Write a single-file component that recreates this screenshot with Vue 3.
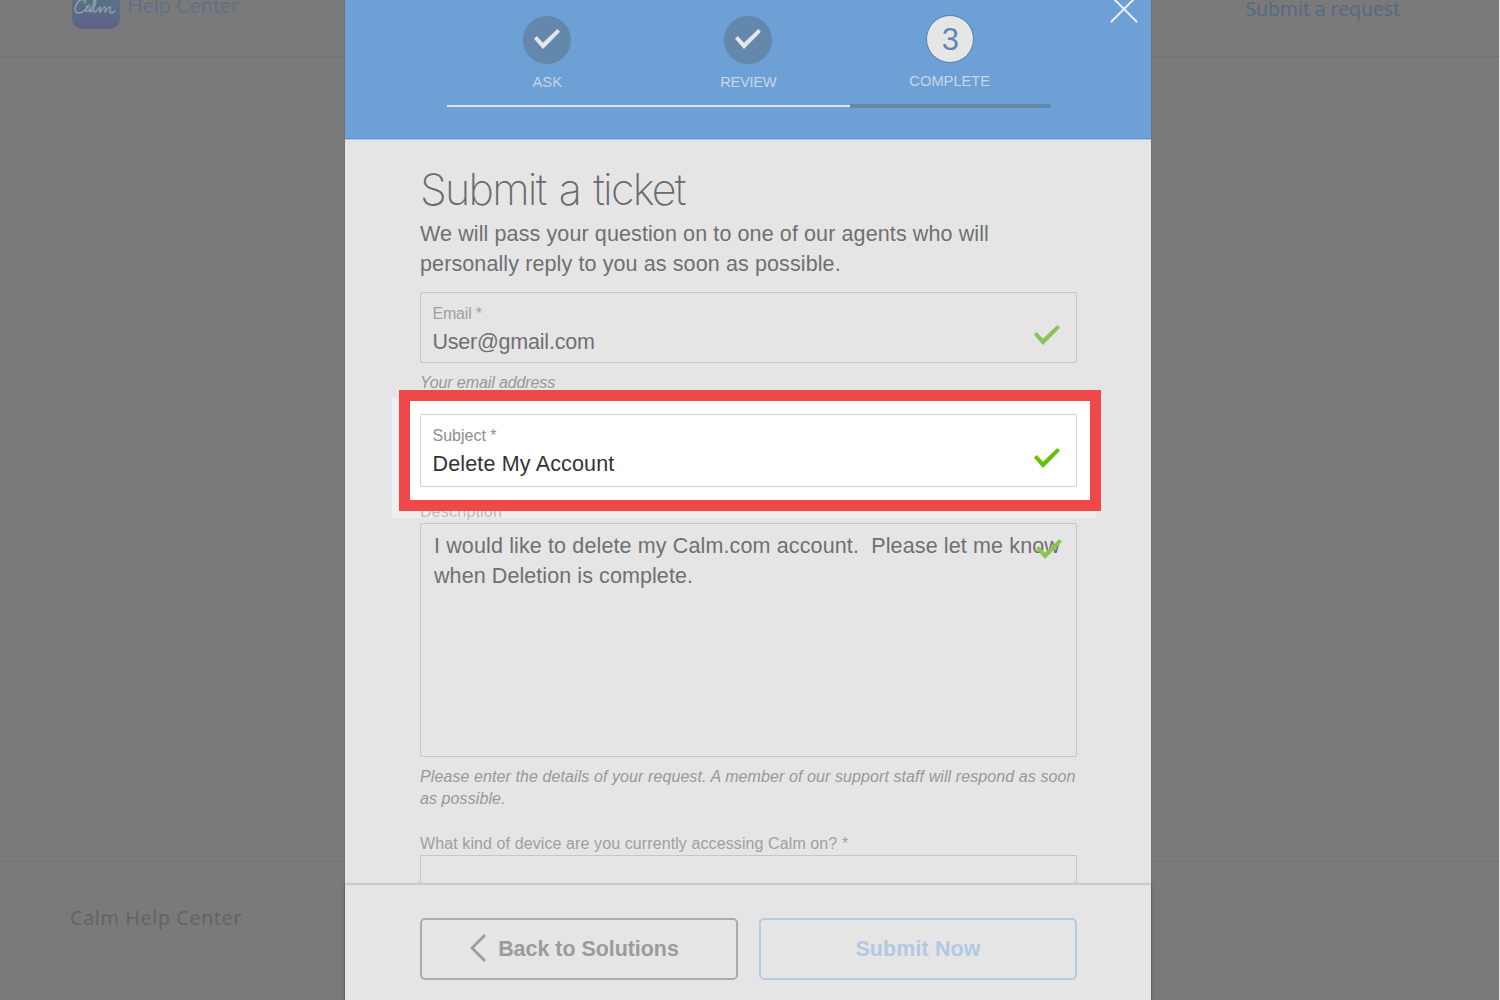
<script setup>
const steps = [
  { label: 'ASK', done: true },
  { label: 'REVIEW', done: true },
  { label: 'COMPLETE', done: false, number: 3 },
]
const checkPoints = '0,29 8,21 27,41 70,0 78,8 27,60'
</script>

<template>
  <div class="screen">
    <div class="page">
      <header class="page-header">
        <div class="brand">
          <div class="logo">
            <svg viewBox="0 0 48 48" width="48" height="48" fill="none" stroke="#929ca8" stroke-width="1.5" stroke-linecap="round" stroke-linejoin="round">
              <path d="M13 22 C14 18 10 17 6 21 C2 26 2 32 7 32 C11 32 13 29 16 26 C19 23 15 24 14 28 C13 32 17 31 19 26 L18 31 C22 30 25 20 23 18 C21 20 20 31 23 31 C26 30 27 26 28 26 C29 27 27 31 28 31 C30 29 31 26 33 26 C35 27 32 31 33 31 C35 29 36 26 38 26 C40 27 36 32 39 32 C41 32 42 31 43 30" />
            </svg>
          </div>
          <span class="brand-name">Help Center</span>
        </div>
        <a class="request">Submit a request</a>
      </header>
      <main class="page-main"></main>
      <footer class="page-footer">Calm Help Center</footer>
    </div>

    <section class="modal">
      <div class="modal-header">
        <svg class="close" viewBox="0 0 30 30" width="30" height="30" fill="none" stroke="#e9edf2" stroke-width="2" stroke-linecap="round">
          <path d="M2.5 2.5 L27.5 27.5 M27.5 2.5 L2.5 27.5" />
        </svg>
        <ol class="steps">
          <li v-for="s in steps" :key="s.label" class="step" :class="{ current: !s.done }">
            <span class="dot">
              <svg v-if="s.done" viewBox="0 0 78 60" width="26" height="20"><polygon :points="checkPoints" fill="#e6e6e6" /></svg>
              <template v-else>{{ s.number }}</template>
            </span>
            <span class="step-label" :class="s.label.toLowerCase()">{{ s.label }}</span>
            <span class="bar"></span>
          </li>
        </ol>
      </div>

      <div class="modal-body">
        <h1>Submit a ticket</h1>
        <p class="intro">We will pass your question on to one of our agents who will<br />personally reply to you as soon as possible.</p>

        <div class="field email">
          <span class="label email-label">Email *</span>
          <span class="value email-value">User@gmail.com</span>
          <svg class="check" viewBox="0 0 78 60" width="26" height="20"><polygon :points="checkPoints" /></svg>
        </div>
        <p class="hint email-hint">Your email address</p>

        <div class="spotlight">
          <div class="ghost"></div>
          <div class="frame"></div>
          <div class="field subject">
            <span class="label">Subject *</span>
            <span class="value">Delete My Account</span>
            <svg class="check" viewBox="0 0 78 60" width="26" height="20"><polygon :points="checkPoints" /></svg>
          </div>
        </div>

        <div class="label desc-label">Description</div>
        <div class="field textarea">
          <span class="first-line">I would like to delete my Calm.com account.&nbsp; Please let me know</span><br />when Deletion is complete.
          <svg class="check" viewBox="0 0 78 60" width="26" height="20"><polygon :points="checkPoints" /></svg>
        </div>
        <p class="hint desc-hint">Please enter the details of your request. A member of our support staff will respond as soon<br />as possible.</p>

        <div class="label device-label">What kind of device are you currently accessing Calm on? *</div>
        <div class="field device"></div>
      </div>

      <div class="modal-footer">
        <button class="btn back">
          <svg viewBox="0 0 16 28" width="16" height="28" fill="none" stroke="#9b9b9b" stroke-width="2.6"><path d="M15 1 L2 14 L15 27" /></svg>
          <span>Back to Solutions</span>
        </button>
        <button class="btn submit">Submit Now</button>
      </div>
    </section>
  </div>
</template>

<style>
body {
  margin: 0;
  overflow: hidden;
}
</style>

<style scoped>
* {
  box-sizing: border-box;
}
.screen {
  position: relative;
  width: 1500px;
  height: 1000px;
  overflow: hidden;
  font-family: "Liberation Sans", Arial, sans-serif;
}
.page {
  display: flex;
  flex-direction: column;
  height: 1000px;
  background: #7a7a7a;
  border-right: 1px solid #e4e4e4;
}
.page-header {
  display: flex;
  justify-content: space-between;
  height: 57px;
  padding: 0 99px 0 72px;
  border-bottom: 1px solid #747474;
}
.brand {
  display: flex;
  gap: 7px;
}
.logo {
  width: 48px;
  height: 48px;
  margin-top: -19px;
  border-radius: 10px;
  background: linear-gradient(#587285 40%, #5c6888 75%, #625f86);
}
.logo svg {
  display: block;
}
.brand-name {
  margin-top: -8px;
  font: 400 21px/26px Lato, sans-serif;
  color: #617184;
}
.request {
  height: 22px;
  font: 400 19.5px/18px "Noto Sans", sans-serif;
  letter-spacing: -0.1px;
  color: #566a82;
}
.page-main {
  flex: 1;
}
.page-footer {
  height: 139px;
  padding: 43px 70px 0;
  border-top: 1px solid #737373;
  font: 400 20px/26px "Noto Sans", sans-serif;
  letter-spacing: 0.45px;
  color: #646464;
}

.modal {
  position: absolute;
  top: 0;
  left: 345px;
  display: flex;
  flex-direction: column;
  width: 806px;
  height: 1000px;
  background: #e5e5e5;
  box-shadow: 0 0 1px rgba(0, 0, 0, 0.3);
}
.modal-header {
  position: relative;
  height: 140px;
  background: #6da0d5;
  border-bottom: 1px solid #a9c8ea;
  box-shadow: inset 0 -1px #5c95d8;
}
.close {
  position: absolute;
  top: -6.5px;
  left: 764.3px;
}
.steps {
  display: flex;
  width: 604.5px;
  margin: 0 0 0 101.5px;
  padding: 15.5px 0 0;
  list-style: none;
}
.step {
  display: flex;
  flex: 1;
  flex-direction: column;
  align-items: center;
}
.dot {
  display: flex;
  align-items: center;
  justify-content: center;
  width: 48px;
  height: 48px;
  margin-left: -1px;
  padding-bottom: 1.5px;
  border-radius: 50%;
  background: #6487ac;
}
.current .dot {
  margin-top: -1px;
  margin-left: 0;
  padding: 2px 0 0;
  border: 1px solid #5580ad;
  background: #e6e6e6;
  color: #5c88b6;
  font-size: 31px;
  line-height: 36px;
}
.step-label {
  height: 18px;
  margin-top: 9.5px;
  font-size: 14.7px;
  line-height: 18px;
  color: #c8d6e6;
}
.complete {
  margin-left: -1px;
}
.review {
  margin-left: -1px;
  letter-spacing: -0.3px;
}
.bar {
  width: 100%;
  height: 2px;
  margin-top: 14px;
  background: #dfe4ea;
}
.current .bar {
  height: 4px;
  margin-top: 14px;
  background: #6487ac;
}

.modal-body {
  height: 743px;
  padding: 23px 74px 0 75px;
}
h1 {
  margin: 0;
  font: 200 43px/52px Inter, sans-serif;
  letter-spacing: -1.75px;
  word-spacing: 2.8px;
  color: #6a6a6a;
}
.intro {
  margin: 4px 0 13px;
  font-size: 21.5px;
  line-height: 30px;
  letter-spacing: 0.11px;
  white-space: nowrap;
  color: #707070;
}
.field {
  position: relative;
  display: flex;
  flex-direction: column;
  border: 1px solid #c6c6c6;
  border-radius: 2px;
  padding: 12px 11.5px 0;
}
.email {
  height: 71px;
}
.label {
  font-size: 16px;
  line-height: 18px;
  color: #9f9f9f;
}
.email-label {
  letter-spacing: -0.2px;
}
.value {
  margin-top: 6px;
  font-size: 21.5px;
  line-height: 26px;
  letter-spacing: 0.16px;
  color: #707070;
}
.email-value {
  letter-spacing: -0.22px;
}
.check {
  position: absolute;
  top: 32px;
  left: 613.3px;
  fill: #8bc454;
}
.hint {
  margin: 0;
  font-size: 16px;
  font-style: italic;
  line-height: 22.5px;
  white-space: nowrap;
  color: #989898;
}
.email-hint {
  height: 22px;
  margin: 9px 0 20px;
  letter-spacing: -0.1px;
}
.spotlight {
  position: relative;
}
.ghost {
  position: absolute;
  top: -17px;
  left: -28px;
  width: 704px;
  height: 121px;
  background: #efefef;
}
.frame {
  position: absolute;
  z-index: 2;
  top: -24px;
  left: -21px;
  width: 702px;
  height: 121px;
  border: 11px solid #f04848;
  background: #fff;
}
.subject {
  z-index: 3;
  height: 73px;
  border-color: #d0d0d0;
}
.subject .label {
  color: #8e8e8e;
}
.subject .value {
  color: #333;
}
.subject .check {
  top: 33px;
  fill: #66bf0b;
}
.desc-label {
  position: relative;
  z-index: 1;
  margin: 16px 0 2px;
  letter-spacing: 0.18px;
  color: #bcbcbc;
}
.textarea {
  display: block;
  height: 234px;
  padding: 7px 13px;
  font-size: 21.5px;
  line-height: 30px;
  letter-spacing: 0.08px;
  white-space: nowrap;
  color: #707070;
}
.first-line {
  letter-spacing: 0.13px;
}
.textarea .check {
  top: 14.5px;
  left: 615px;
}
.desc-hint {
  margin: 8.5px 0 23.5px;
  letter-spacing: 0.09px;
}
.device-label {
  margin: 24px 0 2.5px;
  letter-spacing: 0.1px;
}
.device {
  height: 28px;
  border-bottom: 0;
  border-radius: 0;
}
.modal-footer {
  display: flex;
  gap: 21px;
  height: 117px;
  padding: 33px 74px 0 75px;
  border-top: 2px solid #cacaca;
  background: #e5e5e5;
  box-shadow: 0 2px 3px rgba(0, 0, 0, 0.4);
}
.btn {
  display: flex;
  flex: none;
  align-items: center;
  justify-content: center;
  width: 318px;
  height: 62px;
  padding: 0;
  border: 2px solid #ababab;
  border-radius: 5px;
  background: none;
  font: bold 21.4px/26px "Liberation Sans", Arial, sans-serif;
  color: #9b9b9b;
}
.back {
  gap: 12px;
  padding-right: 9px;
}
.back svg {
  margin-top: -3px;
}
.submit {
  border-color: #b5cbe3;
  color: #b1c9e4;
  letter-spacing: 0.15px;
}
</style>
